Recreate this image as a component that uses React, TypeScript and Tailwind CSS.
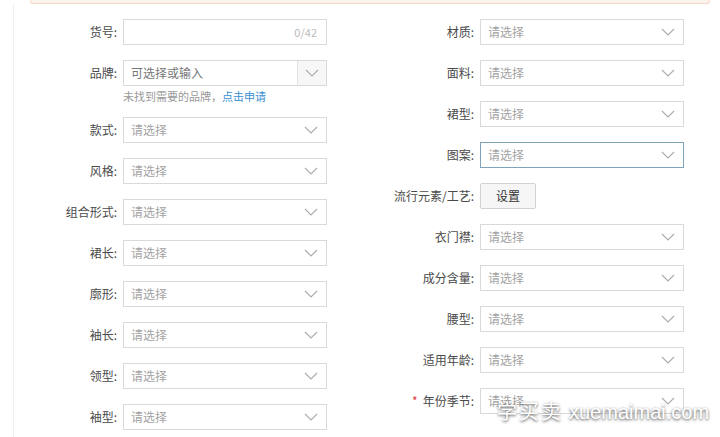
import type { ReactNode } from 'react';

const font = { fontFamily: '"Microsoft YaHei", "Noto Sans CJK SC", "Liberation Sans", sans-serif' };

function Chevron() {
  return (
    <svg width="14" height="8" viewBox="0 0 14 8" fill="none">
      <path d="M1 1L7 7L13 1" stroke="#ababab" strokeWidth="1.1" />
    </svg>
  );
}

function Row({ label, width, required, children }: { label: string; width: string; required?: boolean; children: ReactNode }) {
  return (
    <div className="flex items-center h-[26px]">
      <div className={`${width} shrink-0 pr-[6px] text-right text-[12px] text-[#4a4a4a] whitespace-nowrap`}>
        {required && <span className="text-[#e4393c] mr-[5px]">*</span>}
        {label}:
      </div>
      {children}
    </div>
  );
}

function Select({ focused }: { focused?: boolean }) {
  return (
    <div
      className={`w-[204px] h-[26px] flex items-center justify-between pl-[7px] pr-[8px] bg-white border ${
        focused ? 'border-[#7fa3bb]' : 'border-[#d9d9d9]'
      }`}
    >
      <span className="text-[12px] text-[#a3a3a3]">请选择</span>
      <Chevron />
    </div>
  );
}

const leftRest = ['款式', '风格', '组合形式', '裙长', '廓形', '袖长', '领型', '袖型'];
const rightRows = ['材质', '面料', '裙型', '图案'];
const rightRest = ['衣门襟', '成分含量', '腰型', '适用年龄'];

export default function App() {
  return (
    <div className="relative w-[720px] h-[437px] overflow-hidden bg-white" style={font}>
      <div className="ml-[30px] mr-[10px] h-[4px] bg-[#fdf2ec] border-b border-x border-[#f5d8ca] rounded-b-[3px]" />
      <div className="ml-[13px] h-full border-l border-[#efefef] flex pt-[15px]">
        <div className="w-[313px] shrink-0 flex flex-col gap-[15px]">
          <Row label="货号" width="w-[109px]">
            <div className="w-[204px] h-[26px] flex items-center justify-end pr-[9px] border border-[#d9d9d9]">
              <span className="text-[11px] text-[#bbb]">0/42</span>
            </div>
          </Row>
          <div className="flex flex-col">
            <Row label="品牌" width="w-[109px]">
              <div className="w-[204px] h-[26px] flex border border-[#d9d9d9]">
                <div className="flex-1 flex items-center pl-[7px] text-[12px] text-[#777]">可选择或输入</div>
                <div className="w-[29px] flex items-center justify-center bg-[#f7f7f7] border-l border-[#e3e3e3]">
                  <Chevron />
                </div>
              </div>
            </Row>
            <div className="pl-[109px] h-[16px] pt-[3px] text-[11px] leading-[14px] text-[#999]">
              未找到需要的品牌，<span className="text-[#3a8fd4]">点击申请</span>
            </div>
          </div>
          {leftRest.map((l) => (
            <Row key={l} label={l} width="w-[109px]">
              <Select />
            </Row>
          ))}
        </div>
        <div className="flex-1 flex flex-col gap-[15px]">
          {rightRows.map((l) => (
            <Row key={l} label={l} width="w-[153px]">
              <Select focused={l === '图案'} />
            </Row>
          ))}
          <Row label="流行元素/工艺" width="w-[153px]">
            <button className="w-[56px] h-[26px] rounded-[2px] border border-[#d2d2d2] bg-[#f6f6f6] text-[12px] text-[#333]">
              设置
            </button>
          </Row>
          {rightRest.map((l) => (
            <Row key={l} label={l} width="w-[153px]">
              <Select />
            </Row>
          ))}
          <Row label="年份季节" width="w-[153px]" required>
            <Select />
          </Row>
        </div>
      </div>
      <div className="absolute left-[497px] top-[396px] flex items-baseline gap-[6px] text-white text-[20px] whitespace-nowrap [text-shadow:0_1px_3px_rgba(0,0,0,0.75)]">
        <span className="tracking-[2px]">学买卖</span>
        <span style={{ fontFamily: '"Liberation Sans", sans-serif' }}>xuemaimai.com</span>
      </div>
    </div>
  );
}
